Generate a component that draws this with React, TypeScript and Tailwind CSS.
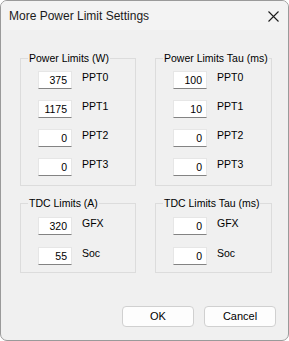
import React from 'react';

type Field = { value: string; label: string };

const groups: { title: string; fields: Field[] }[] = [
  {
    title: 'Power Limits (W)',
    fields: [
      { value: '375', label: 'PPT0' },
      { value: '1175', label: 'PPT1' },
      { value: '0', label: 'PPT2' },
      { value: '0', label: 'PPT3' }
    ]
  },
  {
    title: 'Power Limits Tau (ms)',
    fields: [
      { value: '100', label: 'PPT0' },
      { value: '10', label: 'PPT1' },
      { value: '0', label: 'PPT2' },
      { value: '0', label: 'PPT3' }
    ]
  },
  {
    title: 'TDC Limits (A)',
    fields: [
      { value: '320', label: 'GFX' },
      { value: '55', label: 'Soc' }
    ]
  },
  {
    title: 'TDC Limits Tau (ms)',
    fields: [
      { value: '0', label: 'GFX' },
      { value: '0', label: 'Soc' }
    ]
  }
];

function GroupBox({ title, fields, first }: { title: string; fields: Field[]; first: boolean }) {
  return (
    <div
      className={`relative border border-[#dcdcdc] pl-[17px] ${first ? 'pt-[12px] pb-[9px] gap-[11px]' : 'pt-[13px] pb-[7px] gap-[12px]'} flex flex-col`}
    >
      {/* legend sits on the top border */}
      <span className="absolute -top-[8px] left-[7px] px-[1px] bg-[#f0f0f0] leading-[14px]">{title}</span>
      {fields.map((f, i) => (
        <div key={i} className="flex items-start gap-[10px]">
          <div className="w-[34px] h-[18px] bg-white border border-[#e6e6e6] border-b-[#838383] flex items-center justify-end pr-[4px] leading-none">
            {f.value}
          </div>
          <span className="leading-[12px]">{f.label}</span>
        </div>
      ))}
    </div>
  );
}

export default function App() {
  return (
    <div
      className="w-[289px] h-[341px] bg-[#f0f0f0] border border-[#9a9a9a] rounded-[7px] overflow-hidden flex flex-col text-black text-[10.5px]"
      style={{ fontFamily: '"Liberation Sans", Arial, sans-serif' }}
    >
      {/* Title bar */}
      <div className="h-[29px] bg-[#f3f3f3] flex items-center justify-between pl-[8px] pr-[9px] shrink-0">
        <span className="text-[12px] text-[#1a1a1a]">More Power Limit Settings</span>
        <svg width="11" height="11" viewBox="0 0 11 11" className="mt-[1px]">
          <path d="M0.5 0.5L10.5 10.5M10.5 0.5L0.5 10.5" stroke="#1c1c1c" strokeWidth="1.1" />
        </svg>
      </div>

      {/* Body */}
      <div className="flex-1 flex flex-col pl-[19px] pt-[28px]">
        <div className="grid grid-cols-[116px_117px] gap-x-[19px] gap-y-[17px]">
          {groups.map((g, i) => (
            <GroupBox key={g.title} title={g.title} fields={g.fields} first={i < 2} />
          ))}
        </div>

        <div className="mt-auto mb-[13px] mr-[12px] flex justify-end gap-[10px]">
          <button className="w-[72px] h-[21px] bg-[#fdfdfd] border border-[#d0d0d0] rounded-[4px] text-[11px]">OK</button>
          <button className="w-[72px] h-[21px] bg-[#fdfdfd] border border-[#d0d0d0] rounded-[4px] text-[11px]">Cancel</button>
        </div>
      </div>
    </div>
  );
}
